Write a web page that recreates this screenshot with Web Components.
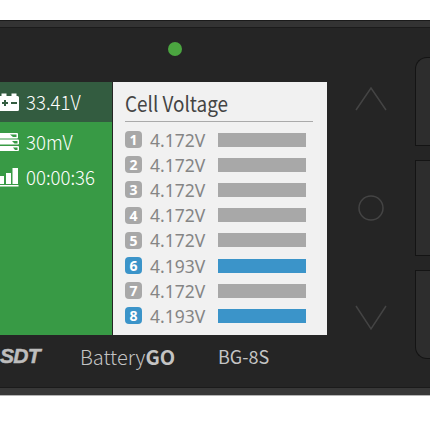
<!DOCTYPE html>
<html>
<head>
<meta charset="utf-8">
<style>
html, body { margin: 0; background: #fff; overflow: hidden; }
body { width: 430px; height: 430px; font-family: "Noto Sans CJK SC", "Noto Sans", sans-serif; }
</style>
</head>
<body>
<bg-device>
    <status-panel slot="screen">
        <status-row slot="head" text="33.41V" icon="battery"></status-row>
        <status-row text="30mV" icon="stack"></status-row>
        <status-row text="00:00:36" icon="bars"></status-row>
    </status-panel>
    <cell-panel slot="screen" title="Cell Voltage">
        <cell-row num="1" volt="4.172V"></cell-row>
        <cell-row num="2" volt="4.172V"></cell-row>
        <cell-row num="3" volt="4.172V"></cell-row>
        <cell-row num="4" volt="4.172V"></cell-row>
        <cell-row num="5" volt="4.172V"></cell-row>
        <cell-row num="6" volt="4.193V" high></cell-row>
        <cell-row num="7" volt="4.172V"></cell-row>
        <cell-row num="8" volt="4.193V" high></cell-row>
    </cell-panel>
</bg-device>

<script>
//Icons//////////////////////////////////////////////////////////////////
const icons = {
    battery: `<svg width="19" height="20" viewBox="0 0 19 20"><path fill="#fff" d="M0 4h1.500V1.500h5V4h5V1.500h5V4h1a1.500 1.500 0 0 1 1.500 1.500v12a1.500 1.500 0 0 1-1.500 1.500H0z"/><path fill="#335c40" d="M2 10h2V8h2v2h2v2H6v2H4v-2H2zM11 10h6v2h-6z"/></svg>`,
    stack: `<svg width="19" height="20" viewBox="0 0 19 20"><path fill="#fff" d="M0 1h17q1 0 1 1v3.500q0 1-1 1H0zM0 7.500h18q1 0 1 1v3q0 1-1 1H0zM0 14h18q1 0 1 1v3q0 1-1 1H0z"/><path fill="#389a45" d="M10 2.500h6.500v2.500H13zM12 9h5.500v2.500H14.500zM13 15.500h4.500V18h-2.500z"/></svg>`,
    bars: `<svg width="19" height="20" viewBox="0 0 19 20"><path fill="#fff" d="M0 9h4v8H0zM6 6h5v11H6zM12.500 1H18v16h-5.500zM0 18h18.500v1.500H0z"/></svg>`
};

//Device shell///////////////////////////////////////////////////////////
const deviceTemplate = document.createElement("template");
deviceTemplate.innerHTML = `
<style>
:host{
    display: grid;
    grid-template-columns: 415px 15px;
    grid-template-rows: 8px 1fr 8px;
    margin-top: 20px;
    height: 376px;
    background: #252525;
    border-bottom: 1px solid #b5b5b5;
    box-sizing: border-box;
    overflow: hidden;
}
.band{
    grid-column: 1 / 3;
    background: #333;
    border-top: 1px solid #1b1b1b;
    border-bottom: 1px solid #1b1b1b;
    box-sizing: border-box;
}
.band.low{
    border-bottom: 0;
    background: #383838;
}
.main{
    display: flex;
    flex-direction: column;
}
.led-zone{
    height: 54px;
    padding: 14px 0 0 168px;
    box-sizing: border-box;
}
.led{
    width: 14px;
    height: 14px;
    border-radius: 50%;
    background: #4ba540;
}
.middle{
    display: flex;
    height: 253px;
}
.screen{
    display: flex;
    width: 327px;
}
</style>
<div class="band"></div>
<div class="main">
    <div class="led-zone"><div class="led"></div></div>
    <div class="middle">
        <div class="screen"><slot name="screen"></slot></div>
        <nav-keys></nav-keys>
    </div>
    <brand-bar></brand-bar>
</div>
<side-keys></side-keys>
<div class="band low"></div>
`;

class BgDevice extends HTMLElement {
    constructor() {
        super();
        this.attachShadow({ mode: "open" });
        this.shadowRoot.appendChild(deviceTemplate.content.cloneNode(true));
    }
}

//Green panel////////////////////////////////////////////////////////////
const statusTemplate = document.createElement("template");
statusTemplate.innerHTML = `
<style>
:host{
    display: flex;
    flex-direction: column;
    width: 112px;
    background: #389a45;
}
.head{
    height: 40px;
    background: #335c40;
    display: flex;
    align-items: center;
}
.list{
    display: flex;
    flex-direction: column;
    gap: 10px;
    padding-top: 7px;
}
</style>
<div class="head"><slot name="head"></slot></div>
<div class="list"><slot></slot></div>
`;

class StatusPanel extends HTMLElement {
    constructor() {
        super();
        this.attachShadow({ mode: "open" });
        this.shadowRoot.appendChild(statusTemplate.content.cloneNode(true));
    }
}

const statusRowTemplate = document.createElement("template");
statusRowTemplate.innerHTML = `
<style>
:host{
    display: flex;
    align-items: center;
    gap: 7px;
    height: 25px;
    color: #fff;
    font-size: 20px;
    font-weight: 300;
    line-height: 24px;
    white-space: nowrap;
}
svg{ display: block; }
#text{
    transform: scaleX(0.93);
    transform-origin: left center;
}
</style>
<span id="icon"></span>
<span id="text"></span>
`;

class StatusRow extends HTMLElement {
    constructor() {
        super();
        this.attachShadow({ mode: "open" });
        this.shadowRoot.appendChild(statusRowTemplate.content.cloneNode(true));
        this.shadowRoot.querySelector("#icon").innerHTML = icons[this.getAttribute("icon")];
        this.shadowRoot.querySelector("#text").textContent = this.getAttribute("text");
    }
}

//Cell list//////////////////////////////////////////////////////////////
const cellPanelTemplate = document.createElement("template");
cellPanelTemplate.innerHTML = `
<style>
:host{
    display: block;
    width: 214px;
    margin-left: 1px;
    padding: 0 14px 0 12px;
    box-sizing: border-box;
    background: #f1f1f1;
}
h2{
    margin: 0;
    height: 40px;
    font-size: 21px;
    font-weight: 400;
    line-height: 43px;
    color: #444;
    border-bottom: 1px solid #aaa;
    box-sizing: border-box;
    white-space: nowrap;
}
#title{
    display: inline-block;
    transform: scaleX(0.9);
    transform-origin: left center;
}
.rows{
    display: grid;
    grid-auto-rows: 25.2px;
    padding-top: 5px;
}
</style>
<h2><span id="title"></span></h2>
<div class="rows"><slot></slot></div>
`;

class CellPanel extends HTMLElement {
    constructor() {
        super();
        this.attachShadow({ mode: "open" });
        this.shadowRoot.appendChild(cellPanelTemplate.content.cloneNode(true));
        this.shadowRoot.querySelector("#title").textContent = this.getAttribute("title");
    }
}

const cellRowTemplate = document.createElement("template");
cellRowTemplate.innerHTML = `
<style>
:host{
    display: flex;
    align-items: center;
    --tone: #a8a8a8;
}
:host([high]){
    --tone: #3b94c9;
}
.num{
    flex: none;
    width: 17px;
    height: 17px;
    border-radius: 4px;
    background: var(--tone);
    color: #fff;
    font-family: "Noto Sans", sans-serif;
    font-size: 14px;
    font-weight: 700;
    line-height: 17px;
    text-align: center;
}
.volt{
    flex: none;
    width: 68px;
    margin-left: 8px;
    color: #858585;
    font-family: "Noto Sans", sans-serif;
    font-size: 17.500px;
    font-weight: 400;
    line-height: 24px;
    white-space: nowrap;
}
.bar{
    flex: none;
    width: 88px;
    height: 14px;
    background: var(--tone);
}
</style>
<span class="num" id="num"></span>
<span class="volt" id="volt"></span>
<span class="bar"></span>
`;

class CellRow extends HTMLElement {
    constructor() {
        super();
        this.attachShadow({ mode: "open" });
        this.shadowRoot.appendChild(cellRowTemplate.content.cloneNode(true));
        this.shadowRoot.querySelector("#num").textContent = this.getAttribute("num");
        this.shadowRoot.querySelector("#volt").textContent = this.getAttribute("volt");
    }
}

//Nav keys///////////////////////////////////////////////////////////////
const navTemplate = document.createElement("template");
navTemplate.innerHTML = `
<style>
:host{
    display: flex;
    flex-direction: column;
    align-items: center;
    width: 88px;
    padding-top: 5px;
    box-sizing: border-box;
}
svg{
    display: block;
    fill: none;
    stroke: #444;
    stroke-width: 1.500;
}
.mid{ margin-top: 84px; }
.down{ margin-top: 84px; }
</style>
<svg width="32" height="24" viewBox="0 0 32 24"><path d="M1 23L16 1L31 23"/></svg>
<svg class="mid" width="26" height="26" viewBox="0 0 26 26"><circle cx="13" cy="13" r="12"/></svg>
<svg class="down" width="32" height="26" viewBox="0 0 32 26"><path d="M1 1L16 24L31 1"/></svg>
`;

class NavKeys extends HTMLElement {
    constructor() {
        super();
        this.attachShadow({ mode: "open" });
        this.shadowRoot.appendChild(navTemplate.content.cloneNode(true));
    }
}

//Side keys//////////////////////////////////////////////////////////////
const sideTemplate = document.createElement("template");
sideTemplate.innerHTML = `
<style>
:host{
    display: flex;
    flex-direction: column;
    gap: 14px;
    padding-top: 29px;
    box-sizing: border-box;
}
div{
    background: #2d2d2d;
    border: 1px solid #141414;
    border-right: 0;
    box-sizing: border-box;
}
.a{ height: 89px; border-top-left-radius: 12px; }
.b{ height: 96px; }
.c{ height: 89px; border-bottom-left-radius: 12px; }
</style>
<div class="a"></div>
<div class="b"></div>
<div class="c"></div>
`;

class SideKeys extends HTMLElement {
    constructor() {
        super();
        this.attachShadow({ mode: "open" });
        this.shadowRoot.appendChild(sideTemplate.content.cloneNode(true));
    }
}

//Brand bar//////////////////////////////////////////////////////////////
const brandTemplate = document.createElement("template");
brandTemplate.innerHTML = `
<style>
:host{
    display: flex;
    align-items: center;
    height: 42px;
    color: #c4c4c4;
    white-space: nowrap;
}
.sdt{
    flex: none;
    width: 80px;
    color: #bdbdbd;
    font-family: "Liberation Sans", sans-serif;
    font-size: 21px;
    font-weight: 700;
    font-style: italic;
    letter-spacing: -0.700px;
    -webkit-text-stroke: 0.500px #bdbdbd;
}
.name{
    flex: none;
    width: 138px;
    font-size: 20px;
    font-weight: 300;
}
.name b{ font-weight: 700; }
.model{
    font-size: 18px;
    font-weight: 400;
}
</style>
<span class="sdt">SDT</span>
<span class="name">Battery<b>GO</b></span>
<span class="model">BG-8S</span>
`;

class BrandBar extends HTMLElement {
    constructor() {
        super();
        this.attachShadow({ mode: "open" });
        this.shadowRoot.appendChild(brandTemplate.content.cloneNode(true));
    }
}

window.customElements.define("bg-device", BgDevice);
window.customElements.define("status-panel", StatusPanel);
window.customElements.define("status-row", StatusRow);
window.customElements.define("cell-panel", CellPanel);
window.customElements.define("cell-row", CellRow);
window.customElements.define("nav-keys", NavKeys);
window.customElements.define("side-keys", SideKeys);
window.customElements.define("brand-bar", BrandBar);
</script>
</body>
</html>
